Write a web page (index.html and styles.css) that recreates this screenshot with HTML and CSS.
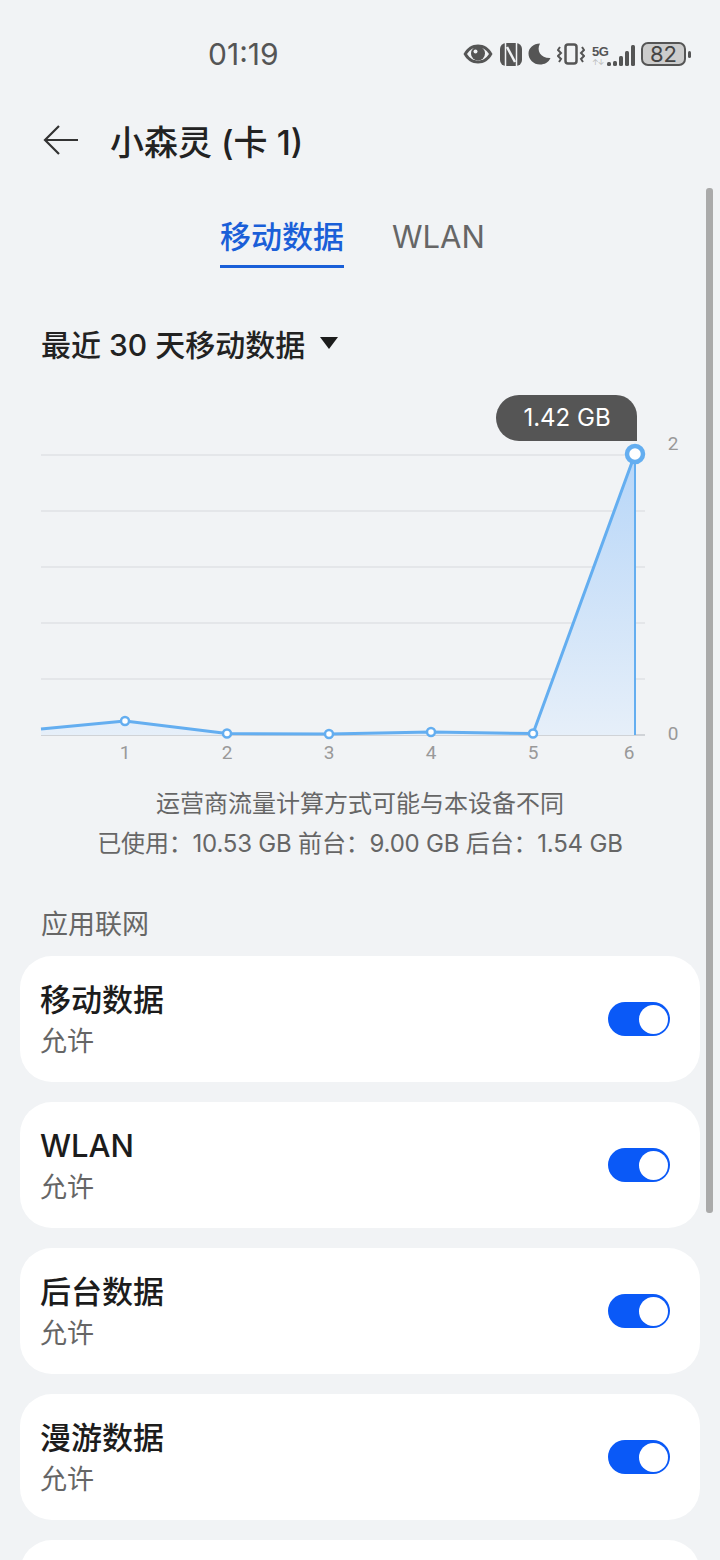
FILE: index.html
```html
<!DOCTYPE html>
<html lang="zh-CN">
<head>
  <meta charset="UTF-8" />
  <title>小森灵 (卡 1)</title>
  <link rel="stylesheet" href="styles.css">
</head>
<body>
  <div class="status-bar">
    <span class="time">01:19</span>
    <div class="status-icons">
      <svg class="ic-eye" width="30" height="20" viewBox="0 0 30 20"><path d="M0.500 10C4 3.500 9 0.500 15 0.500S26 3.500 29.500 10C26 16.500 21 19.500 15 19.500S4 16.500 0.500 10Z" fill="#555"/><path d="M4 10C7 5.500 10.500 3.500 15 3.500S23 5.500 26 10C23 14.500 19.500 16.500 15 16.500S7 14.500 4 10Z" fill="#f1f3f5"/><circle cx="15" cy="9.500" r="7" fill="#555"/><circle cx="12.500" cy="7.500" r="2" fill="#f1f3f5"/></svg>
      <svg class="ic-nfc" width="22" height="23" viewBox="0 0 22 23"><rect width="22" height="23" rx="6" fill="#555"/><path d="M5.500 0V23M16.500 0V23" stroke="#f1f3f5" stroke-width="1.500"/><path d="M7 4L15 19" stroke="#f1f3f5" stroke-width="2.500"/></svg>
      <svg class="ic-moon" width="23" height="22" viewBox="0 0 23 22"><path d="M12 0.500C8 8 13 15.500 22.500 15C20.500 19.500 16.500 21.500 12 21.500C5.500 21.500 0.500 16.500 0.500 10.500C0.500 5 5.500 0.500 12 0.500Z" fill="#555"/></svg>
      <svg class="ic-vibrate" width="28" height="22" viewBox="0 0 28 22"><rect x="8.500" y="1.500" width="11" height="19" rx="2.500" fill="none" stroke="#555" stroke-width="2.500"/><path d="M3 4L1 7L4 10L1 13L4 16L2 19M25 4L27 7L24 10L27 13L24 16L26 19" fill="none" stroke="#555" stroke-width="2"/></svg>
      <div class="signal">
        <div class="net">
          <span class="net-5g">5G</span>
          <span class="net-arrows">↑↓</span>
        </div>
        <div class="bars">
          <i class="bar bar-1"></i>
          <i class="bar bar-2"></i>
          <i class="bar bar-3"></i>
          <i class="bar bar-4"></i>
          <i class="bar bar-5"></i>
        </div>
      </div>
      <div class="battery">
        <div class="battery-body">82</div>
        <i class="battery-tip"></i>
      </div>
    </div>
  </div>

  <div class="header">
    <svg class="back" width="36" height="32" viewBox="0 0 36 32"><path d="M35 16H2M16 2L2 16L16 30" fill="none" stroke="#333" stroke-width="2.200"/></svg>
    <h1 class="title">小森灵 (卡 1)</h1>
  </div>

  <div class="tabs">
    <div class="tab active">移动数据</div>
    <div class="tab">WLAN</div>
  </div>

  <div class="range">
    <span>最近 30 天移动数据</span>
    <i class="caret"></i>
  </div>

  <svg class="chart" width="720" height="385" viewBox="0 385 720 385">
    <defs>
      <linearGradient id="areaFill" x1="0" y1="0" x2="0" y2="1">
        <stop offset="0" stop-color="#b7d6f8"/>
        <stop offset="1" stop-color="#e6eff9"/>
      </linearGradient>
    </defs>
    <g class="grid">
      <line x1="41" y1="455" x2="645" y2="455"/>
      <line x1="41" y1="511" x2="645" y2="511"/>
      <line x1="41" y1="567" x2="645" y2="567"/>
      <line x1="41" y1="623" x2="645" y2="623"/>
      <line x1="41" y1="679" x2="645" y2="679"/>
    </g>
    <line class="base" x1="41" y1="735" x2="645" y2="735"/>
    <path d="M41 729L125 721L227 733.500L329 734L431 732L533 733.500L635 454V735H41Z" fill="url(#areaFill)"/>
    <path class="line" d="M41 729L125 721L227 733.500L329 734L431 732L533 733.500L635 454"/>
    <line class="drop" x1="635" y1="454" x2="635" y2="735"/>
    <circle class="dot" cx="125" cy="721" r="4"/>
    <circle class="dot" cx="227" cy="733.500" r="4"/>
    <circle class="dot" cx="329" cy="734" r="4"/>
    <circle class="dot" cx="431" cy="732" r="4"/>
    <circle class="dot" cx="533" cy="733.500" r="4"/>
    <circle class="dot-big" cx="635" cy="454" r="8"/>
    <path class="tip" d="M519 395H616A21 21 0 0 1 637 416V441H519A23 23 0 0 1 519 395Z"/>
    <text class="tip-text" x="567" y="426">1.42 GB</text>
    <g class="axis">
      <text x="125" y="759">1</text>
      <text x="227" y="759">2</text>
      <text x="329" y="759">3</text>
      <text x="431" y="759">4</text>
      <text x="533" y="759">5</text>
      <text x="629" y="759">6</text>
      <text x="673" y="450">2</text>
      <text x="673" y="740">0</text>
    </g>
  </svg>

  <div class="note">
    <p>运营商流量计算方式可能与本设备不同</p>
    <p class="note-usage">已使用：10.53 GB 前台：9.00 GB 后台：1.54 GB</p>
  </div>

  <h2 class="section">应用联网</h2>

  <div class="list">
    <div class="card">
      <div class="card-text">
        <h4>移动数据</h4>
        <p>允许</p>
      </div>
      <div class="switch"><i class="knob"></i></div>
    </div>
    <div class="card">
      <div class="card-text">
        <h4>WLAN</h4>
        <p>允许</p>
      </div>
      <div class="switch"><i class="knob"></i></div>
    </div>
    <div class="card">
      <div class="card-text">
        <h4>后台数据</h4>
        <p>允许</p>
      </div>
      <div class="switch"><i class="knob"></i></div>
    </div>
    <div class="card">
      <div class="card-text">
        <h4>漫游数据</h4>
        <p>允许</p>
      </div>
      <div class="switch"><i class="knob"></i></div>
    </div>
    <div class="card"></div>
  </div>

  <div class="scrollbar"></div>
</body>
</html>
```

FILE: styles.css
```css
html, body {
  margin: 0;
  height: 1560px;
  overflow: hidden;
}

body {
  position: relative;
  background: #f1f3f5;
  font-family: Inter, "Noto Sans CJK SC", sans-serif;
  color: #1c1c1c;
}

h1, h2, h4, p { margin: 0; font-weight: 400; }
i { display: block; }

/* Status bar */
.status-bar {
  display: flex;
  align-items: center;
  height: 42px;
  padding: 33px 29px 0 208px;
}

.time {
  font-size: 30px;
  color: #555;
}

.status-icons {
  display: flex;
  align-items: center;
  margin-left: auto;
  gap: 7px;
}

.ic-moon, .ic-vibrate { margin-left: -1px; }

.signal {
  display: flex;
  align-items: flex-end;
  width: 42px;
  height: 23px;
}

.net {
  width: 15px;
  color: #555;
  line-height: 1;
}

.net-5g {
  display: block;
  font-size: 13px;
  font-weight: 700;
  letter-spacing: -0.5px;
  font-family: "Liberation Sans", sans-serif;
}

.net-arrows {
  display: block;
  font-size: 8px;
  color: #bbb;
  letter-spacing: -1px;
}

.bars {
  display: flex;
  align-items: flex-end;
  gap: 2.5px;
}

.bar { width: 3.5px; background: #555; border-radius: 1.5px; }
.bar-1 { height: 4px; }
.bar-2 { height: 5px; }
.bar-3 { height: 10px; }
.bar-4 { height: 15px; }
.bar-5 { height: 21px; }

.battery {
  display: flex;
  align-items: center;
  gap: 2px;
}

.battery-body {
  width: 41px;
  height: 20px;
  border: 2px solid #555;
  border-radius: 7px;
  background: #ccc;
  font-size: 22px;
  line-height: 20px;
  text-align: center;
  color: #444;
}

.battery-tip {
  width: 3px;
  height: 7px;
  border-radius: 2px;
  background: #555;
}

/* Header */
.header {
  display: flex;
  align-items: center;
  height: 60px;
  margin-top: 35px;
  padding-left: 43px;
}

.back { margin-right: 31px; }

.title {
  font-size: 34px;
  font-weight: 500;
  color: #222;
}

/* Tabs */
.tabs {
  display: flex;
  gap: 48px;
  padding-left: 220px;
  margin-top: 42px;
}

.tab {
  height: 56px;
  line-height: 50px;
  font-size: 31px;
  color: #666;
  box-sizing: border-box;
}

.tab.active {
  color: #1a5fd8;
  font-weight: 500;
  border-bottom: 3px solid #1a5fd8;
  width: 124px;
  text-align: center;
}

/* Range picker */
.range {
  display: flex;
  align-items: center;
  gap: 15px;
  padding-left: 41px;
  margin-top: 51px;
  height: 48px;
  font-size: 30px;
  font-weight: 500;
  color: #222;
}

.caret {
  width: 0;
  height: 0;
  border-left: 9px solid transparent;
  border-right: 9px solid transparent;
  border-top: 12px solid #1c1c1c;
}

/* Chart */
.chart {
  display: block;
  margin-top: 18px;
}

.grid line { stroke: #e4e6e9; stroke-width: 2; }
.base { stroke: #d0d3d7; stroke-width: 2; }
.line { fill: none; stroke: #64aef0; stroke-width: 3; stroke-linejoin: round; }
.drop { stroke: #64aef0; stroke-width: 2; }
.dot { fill: #fff; stroke: #64aef0; stroke-width: 2.500; }
.dot-big { fill: #fff; stroke: #64aef0; stroke-width: 4.500; }
.tip { fill: #555; }

.tip-text {
  font-size: 24px;
  fill: #fff;
  text-anchor: middle;
}

.axis text {
  font-size: 19px;
  fill: #999;
  text-anchor: middle;
  font-family: Roboto, sans-serif;
}

/* Note */
.note {
  margin-top: 14px;
  text-align: center;
  font-size: 24px;
  line-height: 40px;
  color: #666;
}

.note-usage { letter-spacing: -0.2px; }

/* List */
.section {
  margin: 39px 0 0 41px;
  height: 44px;
  line-height: 44px;
  font-size: 27px;
  color: #666;
}

.list {
  display: flex;
  flex-direction: column;
  gap: 20px;
  margin: 9px 20px 0;
}

.card {
  display: flex;
  align-items: center;
  justify-content: space-between;
  flex: none;
  height: 126px;
  padding: 0 30px 0 20px;
  box-sizing: border-box;
  background: #fff;
  border-radius: 32px;
}

.card-text { padding-top: 4px; }

.card h4 {
  font-size: 31px;
  font-weight: 500;
  line-height: 42px;
}

.card p {
  font-size: 27px;
  line-height: 42px;
  color: #666;
}

.switch {
  display: flex;
  justify-content: flex-end;
  align-items: center;
  width: 62px;
  height: 34px;
  padding: 0 2px;
  box-sizing: border-box;
  border-radius: 17px;
  background: #0a59f7;
}

.knob {
  width: 29px;
  height: 29px;
  border-radius: 50%;
  background: #fff;
}

.scrollbar {
  position: absolute;
  top: 188px;
  left: 706px;
  width: 7px;
  height: 1025px;
  border-radius: 3px;
  background: #aaa;
}
```
